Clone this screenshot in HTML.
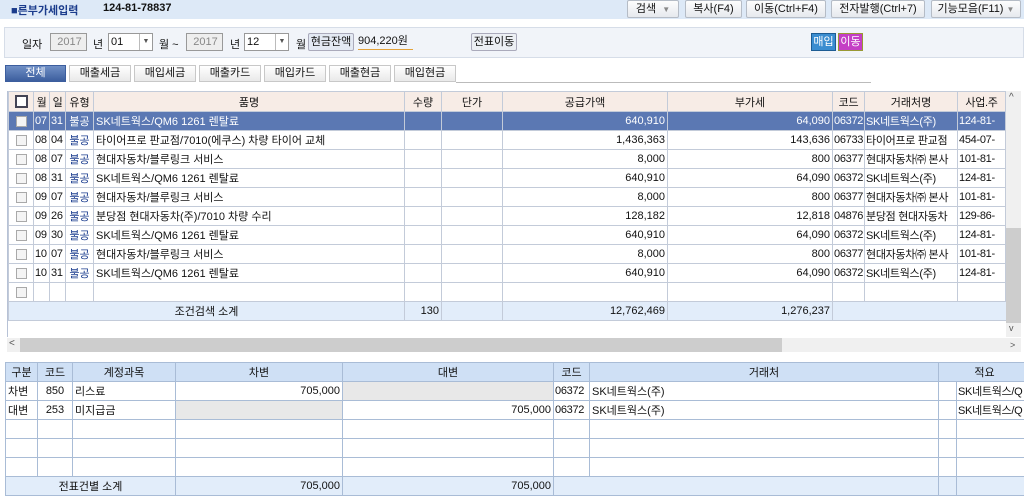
<!DOCTYPE html>
<html><head><meta charset="utf-8"><style>
*{box-sizing:border-box;margin:0;padding:0}
body{width:1024px;height:497px;overflow:hidden;background:#fff;font-family:"Liberation Sans","Noto Sans CJK KR","NanumGothic",sans-serif;font-size:11px;color:#111;position:relative}
.a{position:absolute}
.btn{position:absolute;top:0;height:18px;border:1px solid #b5bcc6;border-radius:2px;background:linear-gradient(#fdfdfd,#e6e9ee);text-align:center;line-height:16px;font-size:11px}
table{border-collapse:collapse;table-layout:fixed;position:absolute}
td{border:1px solid #b7c2d6;height:19px;padding:0 2px;white-space:nowrap;overflow:hidden;font-size:11px}
td.k{padding:0 1px;letter-spacing:-0.3px}
.r{text-align:right}.c{text-align:center}
.g td{border-color:#c3cbd9}
.hd td{background:#f7ece6;text-align:center;height:20px}
.sel td{background:#5b78b3;color:#fff}
.sel td.t{color:#fff}
.t{color:#1b3d8f}
.sum td{background:#e2edfa}
.cb{display:inline-block;width:11px;height:11px;border:1px solid #a9a9a9;background:#f4f4f4;vertical-align:middle}
.bh td{background:#cfe0f5;text-align:center;border-color:#a9bcd6;height:19px}
.b td{border-color:#a9bcd6}
.gr{background:#e8e8e8}
.tab{position:absolute;top:65px;height:17px;border:1px solid #c8c8c8;background:linear-gradient(#fff,#e9e9e9);text-align:center;line-height:15px;font-size:11px}
.in{position:absolute;top:33px;height:18px;border:1px solid #999;background:#fff;font-size:11px;line-height:16px;padding-left:2px}
</style></head><body>
<div class="a" style="left:0;top:0;width:1024px;height:19px;background:#dde9f7"></div>
<div class="a" style="left:11px;top:2px;font-weight:bold;color:#1b3c8c;font-size:11px">■른부가세입력</div>
<div class="a" style="left:103px;top:2px;font-weight:bold;font-size:11px">124-81-78837</div>
<div class="btn" style="left:627px;width:52px">검색 &nbsp;<span style="color:#888;font-size:8px">▼</span></div>
<div class="btn" style="left:685px;width:57px">복사(F4)</div>
<div class="btn" style="left:746px;width:80px">이동(Ctrl+F4)</div>
<div class="btn" style="left:831px;width:94px">전자발행(Ctrl+7)</div>
<div class="btn" style="left:931px;width:90px">기능모음(F11) <span style="color:#888;font-size:8px">▼</span></div>
<div class="a" style="left:4px;top:27px;width:1020px;height:31px;background:#f1f4f9;border:1px solid #d6dde8"></div>
<div class="a" style="left:22px;top:36px">일자</div>
<div class="in" style="left:50px;width:37px;background:#eee;color:#888;text-align:center">2017</div>
<div class="a" style="left:93px;top:36px">년</div>
<div class="in" style="left:108px;width:45px">01<span style="position:absolute;right:0;top:0;width:13px;height:16px;border-left:1px solid #bbb;font-size:7px;text-align:center;color:#555">▼</span></div>
<div class="a" style="left:159px;top:36px">월 ~</div>
<div class="in" style="left:186px;width:37px;background:#eee;color:#888;text-align:center">2017</div>
<div class="a" style="left:230px;top:36px">년</div>
<div class="in" style="left:244px;width:45px">12<span style="position:absolute;right:0;top:0;width:13px;height:16px;border-left:1px solid #bbb;font-size:7px;text-align:center;color:#555">▼</span></div>
<div class="a" style="left:296px;top:36px">월</div>
<div class="a" style="left:308px;top:33px;width:46px;height:18px;border:1px solid #aab;border-radius:2px;background:#e3e9f3;text-align:center;line-height:16px">현금잔액</div>
<div class="a" style="left:358px;top:33px;width:55px;height:17px;border-bottom:1px solid #e3a23a;line-height:16px">904,220원</div>
<div class="a" style="left:471px;top:33px;width:46px;height:18px;border:1px solid #aab;border-radius:2px;background:#eceff4;text-align:center;line-height:16px">전표이동</div>
<div class="a" style="left:811px;top:33px;width:25px;height:18px;background:#3b8dd0;border:1px solid #1d5c93;color:#fff;text-align:center;line-height:16px">매입</div>
<div class="a" style="left:838px;top:33px;width:25px;height:18px;background:#c43fc5;border:1px solid #999933;color:#fff;text-align:center;line-height:16px">이동</div>
<div class="tab" style="left:5px;width:61px;background:linear-gradient(#6f8fc5,#3c5e9e);color:#fff;border-color:#3c5e9e">전체</div>
<div class="tab" style="left:69px;width:62px">매출세금</div>
<div class="tab" style="left:134px;width:62px">매입세금</div>
<div class="tab" style="left:199px;width:62px">매출카드</div>
<div class="tab" style="left:264px;width:62px">매입카드</div>
<div class="tab" style="left:329px;width:62px">매출현금</div>
<div class="tab" style="left:394px;width:62px">매입현금</div>
<div class="a" style="left:456px;top:82px;width:415px;height:1px;background:#bbb"></div>
<div class="a" style="left:7px;top:91px;width:1px;height:246px;background:#b7c2d6"></div>
<table class="g" style="left:8px;top:91px;width:997px">
<colgroup><col style="width:25px"><col style="width:16px"><col style="width:16px"><col style="width:28px"><col style="width:311px"><col style="width:37px"><col style="width:61px"><col style="width:165px"><col style="width:165px"><col style="width:32px"><col style="width:93px"><col style="width:48px"></colgroup>
<tr class="hd"><td><span class="cb" style="width:13px;height:13px;border:2px solid #445;background:#fff"></span></td><td class="k">월</td><td class="k">일</td><td>유형</td><td>품명</td><td>수량</td><td>단가</td><td>공급가액</td><td>부가세</td><td class="k">코드</td><td>거래처명</td><td class="k">사업.주</td></tr>
<tr class="sel"><td class="c"><span class="cb"></span></td><td class="k">07</td><td class="k">31</td><td class="t c">불공</td><td>SK네트웍스/QM6 1261 렌탈료</td><td></td><td></td><td class="r">640,910</td><td class="r">64,090</td><td class="k">06372</td><td class="k">SK네트웍스(주)</td><td class="k">124-81-</td></tr>
<tr><td class="c"><span class="cb"></span></td><td class="k">08</td><td class="k">04</td><td class="t c">불공</td><td>타이어프로 판교점/7010(에쿠스) 차량 타이어 교체</td><td></td><td></td><td class="r">1,436,363</td><td class="r">143,636</td><td class="k">06733</td><td class="k">타이어프로 판교점</td><td class="k">454-07-</td></tr>
<tr><td class="c"><span class="cb"></span></td><td class="k">08</td><td class="k">07</td><td class="t c">불공</td><td>현대자동차/블루링크 서비스</td><td></td><td></td><td class="r">8,000</td><td class="r">800</td><td class="k">06377</td><td class="k">현대자동차㈜ 본사</td><td class="k">101-81-</td></tr>
<tr><td class="c"><span class="cb"></span></td><td class="k">08</td><td class="k">31</td><td class="t c">불공</td><td>SK네트웍스/QM6 1261 렌탈료</td><td></td><td></td><td class="r">640,910</td><td class="r">64,090</td><td class="k">06372</td><td class="k">SK네트웍스(주)</td><td class="k">124-81-</td></tr>
<tr><td class="c"><span class="cb"></span></td><td class="k">09</td><td class="k">07</td><td class="t c">불공</td><td>현대자동차/블루링크 서비스</td><td></td><td></td><td class="r">8,000</td><td class="r">800</td><td class="k">06377</td><td class="k">현대자동차㈜ 본사</td><td class="k">101-81-</td></tr>
<tr><td class="c"><span class="cb"></span></td><td class="k">09</td><td class="k">26</td><td class="t c">불공</td><td>분당점 현대자동차(주)/7010 차량 수리</td><td></td><td></td><td class="r">128,182</td><td class="r">12,818</td><td class="k">04876</td><td class="k">분당점 현대자동차</td><td class="k">129-86-</td></tr>
<tr><td class="c"><span class="cb"></span></td><td class="k">09</td><td class="k">30</td><td class="t c">불공</td><td>SK네트웍스/QM6 1261 렌탈료</td><td></td><td></td><td class="r">640,910</td><td class="r">64,090</td><td class="k">06372</td><td class="k">SK네트웍스(주)</td><td class="k">124-81-</td></tr>
<tr><td class="c"><span class="cb"></span></td><td class="k">10</td><td class="k">07</td><td class="t c">불공</td><td>현대자동차/블루링크 서비스</td><td></td><td></td><td class="r">8,000</td><td class="r">800</td><td class="k">06377</td><td class="k">현대자동차㈜ 본사</td><td class="k">101-81-</td></tr>
<tr><td class="c"><span class="cb"></span></td><td class="k">10</td><td class="k">31</td><td class="t c">불공</td><td>SK네트웍스/QM6 1261 렌탈료</td><td></td><td></td><td class="r">640,910</td><td class="r">64,090</td><td class="k">06372</td><td class="k">SK네트웍스(주)</td><td class="k">124-81-</td></tr>
<tr><td class="c"><span class="cb"></span></td><td></td><td></td><td></td><td></td><td></td><td></td><td></td><td></td><td></td><td></td><td></td></tr>
<tr class="sum"><td colspan="5" class="c">조건검색 소계</td><td class="r">130</td><td></td><td class="r">12,762,469</td><td class="r">1,276,237</td><td colspan="3" style="border-right:none"></td></tr>
</table>
<div class="a" style="left:1006px;top:91px;width:15px;height:246px;background:#f0f0f0"></div>
<div class="a" style="left:1006px;top:228px;width:15px;height:95px;background:#cdcdcd"></div>
<div class="a" style="left:1009px;top:92px;font-size:10px;color:#555">^</div>
<div class="a" style="left:1009px;top:323px;font-size:9px;color:#555">v</div>
<div class="a" style="left:7px;top:338px;width:1014px;height:14px;background:#f0f0f0"></div>
<div class="a" style="left:20px;top:338px;width:762px;height:14px;background:#cdcdcd"></div>
<div class="a" style="left:9px;top:338px;font-size:10px;color:#555">&lt;</div>
<div class="a" style="left:1010px;top:340px;font-size:9px;color:#555">&gt;</div>
<table class="b" style="left:5px;top:362px;width:1025px">
<colgroup><col style="width:32px"><col style="width:35px"><col style="width:103px"><col style="width:167px"><col style="width:211px"><col style="width:36px"><col style="width:349px"><col style="width:18px"><col style="width:74px"></colgroup>
<tr class="bh"><td>구분</td><td>코드</td><td>계정과목</td><td>차변</td><td>대변</td><td>코드</td><td>거래처</td><td colspan="2">적요</td></tr>
<tr><td>차변</td><td class="c">850</td><td>리스료</td><td class="r">705,000</td><td class="gr"></td><td class="k">06372</td><td>SK네트웍스(주)</td><td></td><td class="k">SK네트웍스/Q</td></tr>
<tr><td>대변</td><td class="c">253</td><td>미지급금</td><td class="gr"></td><td class="r">705,000</td><td class="k">06372</td><td>SK네트웍스(주)</td><td></td><td class="k">SK네트웍스/Q</td></tr>
<tr><td></td><td></td><td></td><td></td><td></td><td></td><td></td><td></td><td></td></tr>
<tr><td></td><td></td><td></td><td></td><td></td><td></td><td></td><td></td><td></td></tr>
<tr><td></td><td></td><td></td><td></td><td></td><td></td><td></td><td></td><td></td></tr>
<tr class="sum"><td colspan="3" class="c">전표건별 소계</td><td class="r">705,000</td><td class="r">705,000</td><td colspan="2"></td><td></td><td></td></tr>
</table>
</body></html>
